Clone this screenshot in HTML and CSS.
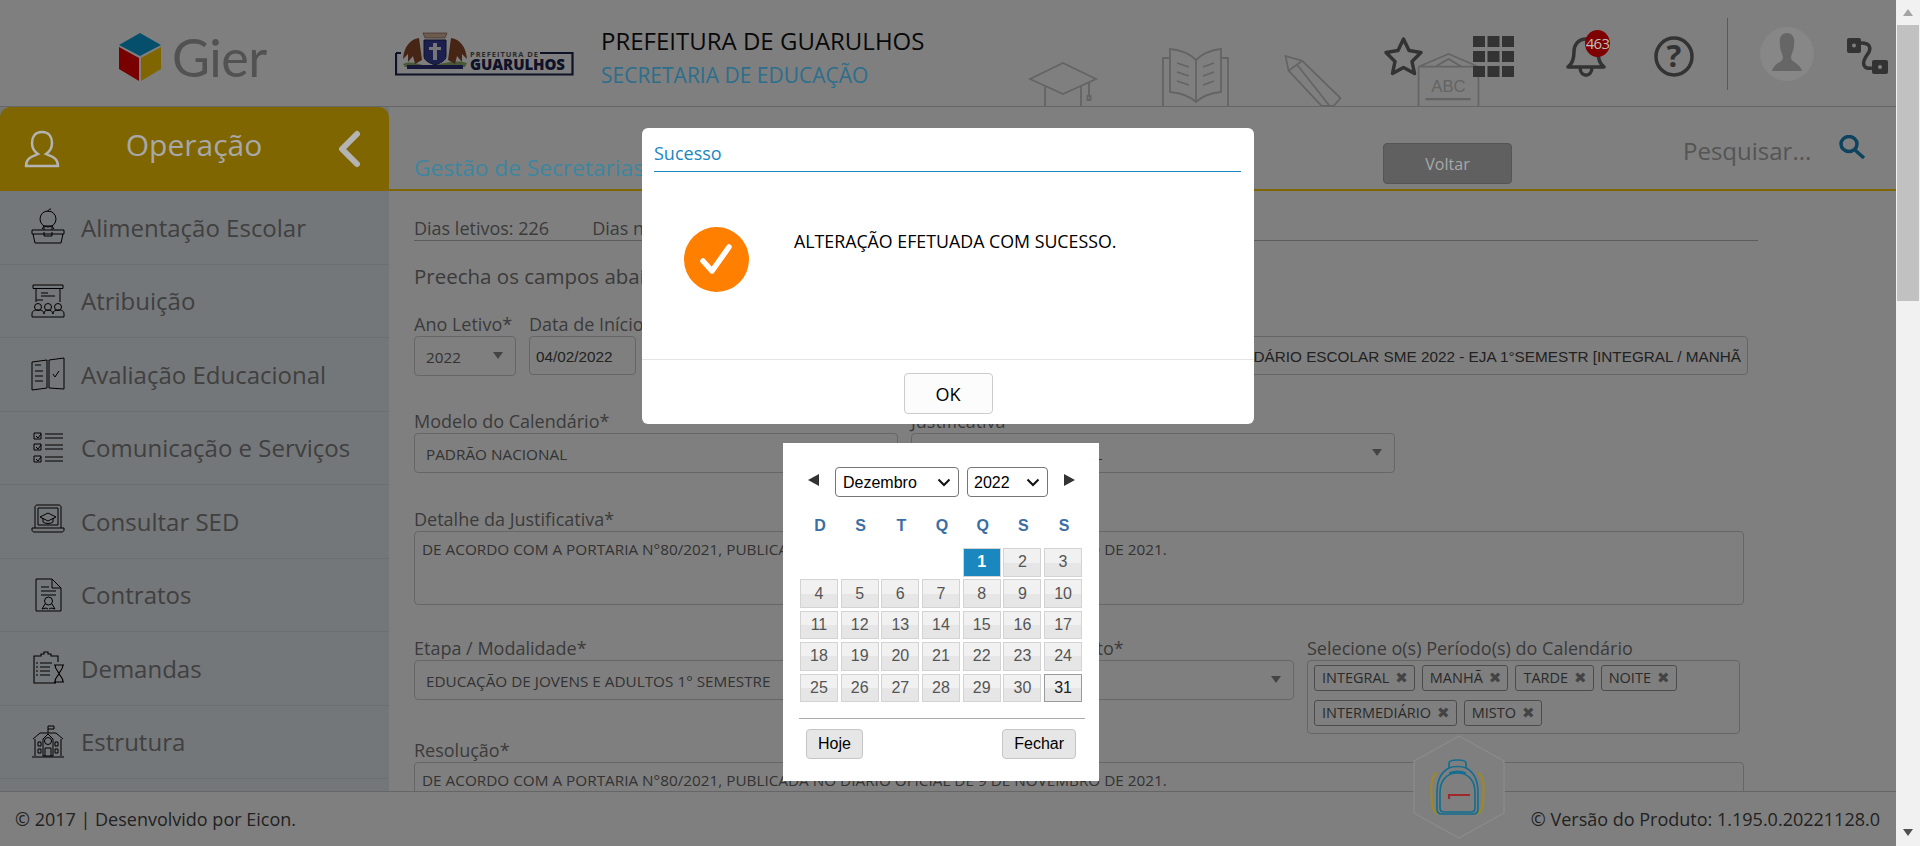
FILE: index.html
```html
<!DOCTYPE html>
<html lang="pt-BR">
<head>
<meta charset="utf-8">
<title>Gestão de Secretarias</title>
<link rel="stylesheet" href="styles.css">
</head>
<body>
<div class="app">
  <div class="page">
    <header class="topbar">
      <div class="brand">
        <svg class="cube" viewBox="0 0 42 48"><polygon points="21,0 42,12 21,23 0,12" fill="#0a9fd8"/><polygon points="0,14 20,25 20,48 0,36" fill="#f00000"/><polygon points="42,14 22,25 22,48 42,36" fill="#ffcc00"/></svg>
        <span class="brand-name">Gier</span>
      </div>
      <svg class="city-logo" viewBox="0 0 179 44">
        <path d="M1 21V42.500H177.500V21H145M1 21H6" fill="none" stroke="#1c2450" stroke-width="2.200"/>
        <path d="M8 32C20 27 26 36 40 33C54 30 62 28 72 31L70 35H10Z" fill="#8fb56a"/>
        <path d="M24 6C15 7 9 15 8 27L13 22L13 30L18 24L20 32L27 28Z" fill="#8c4a2a"/>
        <path d="M56 6C65 7 71 15 72 27L67 22L67 30L62 24L60 32L53 28Z" fill="#8c4a2a"/>
        <path d="M29 8H51V24C51 29 45 31 40 33C35 31 29 29 29 24Z" fill="#3b3f9c" stroke="#1c2450"/>
        <path d="M38 11H42V15H46V18H42V28H38V18H34V15H38Z" fill="#ededed"/>
        <path d="M28 1H52L50 6H30Z" fill="#d8b9a0" stroke="#7a4a30" stroke-width=".6"/>
        <path d="M12 33H68V37H12Z" fill="#2f2f78"/>
        <text x="75" y="24.500" class="city-small" textLength="68">PREFEITURA DE</text>
        <text x="75" y="38" class="city-big" textLength="95">GUARULHOS</text>
      </svg>
      <div class="org">
        <div class="org-name">PREFEITURA DE GUARULHOS</div>
        <div class="org-unit">SECRETARIA DE EDUCAÇÃO</div>
      </div>
      <div class="art">
        <svg class="art-cap" viewBox="0 0 68 44"><path d="M34 1L67 17L34 32L1 17ZM16 24V44M52 24V44M60 20V34M58.500 34H61.500V38H58.500Z"/></svg>
        <svg class="art-book" viewBox="0 0 67 58"><path d="M8 10H1V58M59 10H66V58M8 1C18 2 28 6 34 12C40 6 50 2 59 1V44C50 45 40 48 34 54C28 48 18 45 8 44ZM34 12V54M15 15L27 19M15 24L27 28M15 33L27 37M52 15L41 19M52 24L41 28M52 33L41 37"/></svg>
        <svg class="art-pencil" viewBox="0 0 58 52"><path d="M1 1L18 6L57 44L50 52H38L4 16ZM4 16L18 6M12 9L46 52"/></svg>
        <svg class="art-abc" viewBox="0 0 63 54"><path d="M1 14L31.500 1L62 14ZM1 14V54M62 14V54M18 14L31.500 6L45 14"/><path d="M8 47H54" stroke-width="2.500"/><text x="31.500" y="40" class="abc-text">ABC</text></svg>
      </div>
      <div class="tools">
        <svg class="tool-star" viewBox="0 0 40 40"><path d="M20 3L25.500 14.500L37.500 16.500L28.500 25.500L31 37.500L20 31.500L9 37.500L11.500 25.500L2.500 16.500L14.500 14.500Z"/></svg>
        <svg class="tool-grid" viewBox="0 0 41 41"><rect width="12" height="11"/><rect x="14.500" width="12" height="11"/><rect x="29" width="12" height="11"/><rect y="15" width="12" height="11"/><rect x="14.500" y="15" width="12" height="11"/><rect x="29" y="15" width="12" height="11"/><rect y="30" width="12" height="11"/><rect x="14.500" y="30" width="12" height="11"/><rect x="29" y="30" width="12" height="11"/></svg>
        <div class="bell-box">
          <svg class="tool-bell" viewBox="0 0 40 41"><path d="M2 31C6 28 8 24 8 16C8 8 13 3 20 3C27 3 32 8 32 16C32 24 34 28 38 31ZM14 31C14 42 26 42 26 31"/></svg>
          <span class="badge"><span class="badge-num">463</span></span>
        </div>
        <svg class="tool-help" viewBox="0 0 40 41"><ellipse cx="20" cy="20.500" rx="18" ry="18.500"/><text x="20" y="31" class="help-mark">?</text></svg>
        <span class="tool-divider"></span>
        <div class="avatar"><svg viewBox="0 0 54 54"><path d="M27 6C21 6 19 11 20 18C20 24 23 27 23 31C23 35 14 36 12 44H42C40 36 31 35 31 31C31 27 34 24 34 18C35 11 33 6 27 6Z"/></svg></div>
        <svg class="tool-switch" viewBox="0 0 41 36"><path class="sw-line" d="M14 5C25 5 24 12 20 17C15 24 15 32 25 30"/><rect class="sw-box" x="0" y="0" width="14" height="15" rx="2"/><rect class="sw-box" x="25" y="22" width="16" height="14" rx="2"/><circle class="sw-hole" cx="7" cy="7.500" r="2"/><circle class="sw-hole" cx="33" cy="29" r="2"/></svg>
      </div>
    </header>
    <div class="body">
      <aside class="sidebar">
        <div class="side-head">
          <svg class="side-user" viewBox="0 0 36 38"><path d="M18 2C11 2 8 7 8 13C8 18 11 22 14 24C10 26 2 27 2 36H34C34 27 26 26 22 24C25 22 28 18 28 13C28 7 25 2 18 2Z"/></svg>
          <span class="side-title">Operação</span>
          <svg class="side-back" viewBox="0 0 24 38"><path d="M20 4L5 19L20 34"/></svg>
        </div>
        <nav class="side-nav">
          <a class="side-item"><svg class="side-icon" viewBox="0 0 34 34"><circle cx="17" cy="9" r="8"/><path d="M17 2C17 0 18 -1 20 -1M11 19L13 16H21L23 19M1 20H33V24H1ZM2 24L4 33H30L32 24M13 20V17M21 20V17M13 22V26H21V22"/></svg><span>Alimentação Escolar</span></a>
          <a class="side-item"><svg class="side-icon" viewBox="0 0 34 34"><path d="M2 1H32V4.500H2ZM5 4.500V18M29 4.500V18M10 9H17M10 12H24M5 16H12"/><circle cx="7" cy="23" r="3.500"/><circle cx="17" cy="23" r="3.500"/><circle cx="27" cy="23" r="3.500"/><path d="M1 33V30C1 27 3 26 7 26C11 26 13 27 13 30C13 27 15 26 17 26C20 26 21 27 22 30C22 27 24 26 27 26C31 26 33 27 33 30V33Z"/></svg><span>Atribuição</span></a>
          <a class="side-item"><svg class="side-icon" viewBox="0 0 34 34"><path d="M1 5L16 3V31L1 33ZM18 3L33 1V32L18 31ZM4 8H10M4 14H12M4 19H12M4 24H12M22 17L24 20L28 14"/></svg><span>Avaliação Educacional</span></a>
          <a class="side-item"><svg class="side-icon" viewBox="0 0 34 34"><path d="M3 2H10V8H3ZM3 13H10V19H3ZM3 25H10V31H3ZM14 3H32M14 7H32M14 14H32M14 18H32M14 26H32M14 30H32M5 5L7 7L10 3M5 16L7 18L10 14M5 28L7 30L10 26"/></svg><span>Comunicação e Serviços</span></a>
          <a class="side-item"><svg class="side-icon" viewBox="0 0 34 34"><path d="M4 24V3C4 2 5 1 6 1H28C29 1 30 2 30 3V24M1 24H33V26C33 27 32 28 31 28H3C2 28 1 27 1 26ZM17 9L25 13L17 17L9 13ZM12 14V18C14 20 20 20 22 18V14M7 4H27V21H7Z"/></svg><span>Consultar SED</span></a>
          <a class="side-item"><svg class="side-icon" viewBox="0 0 34 34"><path d="M5 1H21L30 10V33H5ZM21 1V10H30M10 9H18M10 13H25M10 17H25"/><circle cx="17.500" cy="23" r="4"/><path d="M14 26L11 31L15 30L17 31M21 26L24 31L20 30L18 31"/></svg><span>Contratos</span></a>
          <a class="side-item"><svg class="side-icon" viewBox="0 0 34 34"><path d="M27 11V5H20V3H17V1H13V3H10V5H3V32H25M5 12H7M9 12H21M5 16H7M9 16H19M5 20H7M9 20H19M5 24H7M9 24H19M23 14H33M23 31H33M24 14C24 19 28 21 28 22.500C28 24 24 26 24 31M32 14C32 19 28 21 28 22.500C28 24 32 26 32 31" stroke-width="1.100"/></svg><span>Demandas</span></a>
          <a class="side-item"><svg class="side-icon" viewBox="0 0 34 34"><path d="M17 8V1H23V4H17M2 14L9 8H25L32 14M4 14V31M30 14V31M1 32H33M12 14L17 9L22 14V31H12ZM14 31V23H20V31M7 17H10V21H7ZM24 17H27V21H24ZM7 24H10V28H7ZM24 24H27V28H24Z"/><circle cx="17" cy="16" r="3.500"/></svg><span>Estrutura</span></a>
        </nav>
      </aside>
      <main class="content">
        <div class="content-head">
          <h1 class="content-title">Gestão de Secretarias</h1>
          <button class="btn-back"><span class="btn-back-text">Voltar</span></button>
          <span class="search-text">Pesquisar...</span>
          <svg class="search-icon" viewBox="0 0 27 24"><ellipse cx="10" cy="9" rx="8" ry="7.500"/><path d="M16 15L25 23"/></svg>
        </div>
        <div class="form">
          <div class="stats"><span>Dias letivos: 226</span><span>Dias não letivos: 139</span></div>
          <p class="form-intro">Preecha os campos abaixo para alterar</p>
          <div class="row row-first">
            <div class="field f-year"><label>Ano Letivo*</label><div class="select"><span>2022</span><i class="caret"></i></div></div>
            <div class="field f-date"><label>Data de Início*</label><div class="input plain">04/02/2022</div></div>
            <div class="field f-date"><label>Data de Fim*</label><div class="input plain">31/12/2022</div></div>
            <div class="field f-name"><label>Descrição*</label><div class="input plain name-text"><span>CALENDÁRIO ESCOLAR SME 2022 - EJA 1°SEMESTR [INTEGRAL / MANHÃ</span></div></div>
          </div>
          <div class="row row-second">
            <div class="field f-half"><label>Modelo do Calendário*</label><div class="select"><span>PADRÃO NACIONAL</span><i class="caret"></i></div></div>
            <div class="field f-half"><label>Justificativa</label><div class="select"><span>CALENDÁRIO MUNICIPAL</span><i class="caret"></i></div></div>
          </div>
          <div class="row row-third">
            <div class="field f-wide"><label>Detalhe da Justificativa*</label><div class="area">DE ACORDO COM A PORTARIA N°80/2021, PUBLICADA NO DIÁRIO OFICIAL DE 9 DE NOVEMBRO DE 2021.</div></div>
          </div>
          <div class="row row-fourth">
            <div class="field f-half"><label>Etapa / Modalidade*</label><div class="select"><span>EDUCAÇÃO DE JOVENS E ADULTOS 1° SEMESTRE</span></div></div>
            <div class="field f-mode"><label>Formas de Atendimento*</label><div class="select end"><i class="caret"></i></div></div>
            <div class="field f-period"><label>Selecione o(s) Período(s) do Calendário</label>
              <div class="tags">
                <span class="tag">INTEGRAL <b>✖</b></span><span class="tag">MANHÃ <b>✖</b></span><span class="tag">TARDE <b>✖</b></span><span class="tag">NOITE <b>✖</b></span><span class="tag">INTERMEDIÁRIO <b>✖</b></span><span class="tag">MISTO <b>✖</b></span>
              </div>
            </div>
          </div>
          <div class="row row-fifth">
            <div class="field f-wide"><label>Resolução*</label><div class="area">DE ACORDO COM A PORTARIA N°80/2021, PUBLICADA NO DIÁRIO OFICIAL DE 9 DE NOVEMBRO DE 2021.</div></div>
          </div>
        </div>
      </main>
    </div>
    <footer class="footer">
      <span>© 2017 | Desenvolvido por Eicon.</span>
      <span>© Versão do Produto: 1.195.0.20221128.0</span>
    </footer>
    <svg class="hex" viewBox="0 0 92 104">
      <polygon class="hex-shape" points="46,1 91,26 91,78 46,103 1,78 1,26"/>
      <path class="pack-strap" d="M24 38C17 42 18 54 19 66C19 72 21 77 25 79M65 38C72 42 71 54 70 66C70 72 68 77 64 79"/>
      <path class="pack-body" d="M36 33V28C36 26 39 25 44.500 25C50 25 53 26 53 28V33C61 37 65 46 65 58V74C65 77 63 79 60 79H29C26 79 24 77 24 74V58C24 46 28 37 36 33ZM36 33C40 31 49 31 53 33M36 38C41 36 48 36 53 38M27 58C27 46 33 38 44.500 38C56 38 62 46 62 58V73C62 76 61 77 58 77H31C28 77 27 76 27 73Z"/>
      <path class="pack-zip" d="M35 60H57M36 60V64"/>
    </svg>
  </div>
  <div class="scrollbar">
    <i class="sb-up"></i>
    <i class="sb-thumb"></i>
    <i class="sb-down"></i>
  </div>
  <div class="overlay"></div>
  <section class="modal">
    <div class="modal-head"><span>Sucesso</span></div>
    <div class="modal-body">
      <svg class="ok-icon" viewBox="0 0 65 65"><circle cx="32.500" cy="32.500" r="32.500"/><path d="M19 34L28 44L45 20"/></svg>
      <p>ALTERAÇÃO EFETUADA COM SUCESSO.</p>
    </div>
    <div class="modal-foot"><button class="btn-ok">OK</button></div>
  </section>
  <section class="picker">
    <div class="picker-head">
      <i class="arrow-left"></i>
      <select class="pick-month"><option>Dezembro</option></select>
      <select class="pick-year"><option>2022</option></select>
      <i class="arrow-right"></i>
    </div>
    <div class="week"><span>D</span><span>S</span><span>T</span><span>Q</span><span>Q</span><span>S</span><span>S</span></div>
    <div class="days">
      <span class="blank"></span><span class="blank"></span><span class="blank"></span><span class="blank"></span>
      <a class="today">1</a><a>2</a><a>3</a>
      <a>4</a><a>5</a><a>6</a><a>7</a><a>8</a><a>9</a><a>10</a>
      <a>11</a><a>12</a><a>13</a><a>14</a><a>15</a><a>16</a><a>17</a>
      <a>18</a><a>19</a><a>20</a><a>21</a><a>22</a><a>23</a><a>24</a>
      <a>25</a><a>26</a><a>27</a><a>28</a><a>29</a><a>30</a><a class="active">31</a>
    </div>
    <div class="picker-foot"><button>Hoje</button><button>Fechar</button></div>
  </section>
</div>
</body>
</html>
```

FILE: styles.css
```css
* { box-sizing: border-box; }
html, body { margin: 0; height: 100%; overflow: hidden; }
body { font-family: "Open Sans", sans-serif; color: #777; background: #fff; }
.app { position: relative; width: 1920px; height: 846px; display: flex; overflow: hidden; }
.page { width: 1896px; height: 846px; display: flex; flex-direction: column; background: #fff; }

/* top bar */
.topbar { height: 107px; flex: none; display: flex; align-items: flex-start; border-bottom: 1px solid #ccc; }
.brand { width: 395px; flex: none; padding: 33px 0 0 119px; display: flex; gap: 11px; align-items: flex-start; }
.cube { width: 42px; height: 48px; flex: none; }
.brand-name { font-family: Lato, sans-serif; font-weight: 400; font-size: 52px; line-height: 48px; color: #a4a4a4; letter-spacing: -.5px; }
.city-logo { width: 179px; height: 44px; margin-top: 32px; flex: none; }
.city-small { font: 700 7.500px "Open Sans", sans-serif; fill: #555; }
.city-big { font: 800 15px "Open Sans", sans-serif; fill: #1c2450; }
.org { margin: 24px 0 0 27px; width: 420px; flex: none; }
.org-name { font-size: 24px; line-height: 34px; color: #111; }
.org-unit { position: relative; z-index: 1; font-size: 21px; line-height: 34px; color: #2c6e8c; }
.art svg { position: absolute; fill: none; stroke: #c8c8c8; stroke-width: 1.800; overflow: visible; }
.art-cap { left: 1029px; top: 62px; width: 68px; height: 44px; }
.art-book { left: 1162px; top: 48px; width: 67px; height: 58px; }
.art-pencil { left: 1284px; top: 55px; width: 58px; height: 51px; }
.art-abc { left: 1417px; top: 53px; width: 63px; height: 53px; }
.abc-text { font: 400 17px "Liberation Sans", sans-serif; text-anchor: middle; fill: #c8c8c8; stroke: none; }
.tools svg, .bell-box, .avatar, .tool-divider { position: absolute; }
.tool-star { left: 1383px; top: 36px; width: 41px; height: 40px; fill: none; stroke: #666; stroke-width: 3.500; stroke-linejoin: round; }
.tool-grid { left: 1473px; top: 36px; width: 41px; height: 41px; fill: #666; }
.bell-box { left: 1566px; top: 30px; width: 46px; height: 48px; }
.bell-box .tool-bell { left: 0; top: 6px; width: 40px; height: 41px; fill: none; stroke: #666; stroke-width: 3.500; stroke-linejoin: round; }
.badge { position: absolute; left: 19px; top: 0; width: 25px; height: 27px; border-radius: 50%; background: #ff0000; font-size: 15px; line-height: 27px; text-align: center; letter-spacing: -.8px; }
.badge-num { position: relative; z-index: 1; color: #bdbdbd; }
.tool-help { left: 1654px; top: 36px; width: 40px; height: 41px; fill: none; stroke: #666; stroke-width: 3.500; }
.help-mark { font: 700 31px "Open Sans", sans-serif; fill: #666; stroke: none; text-anchor: middle; }
.tool-divider { left: 1727px; top: 18px; width: 1px; height: 72px; background: #b0b0b0; }
.avatar { z-index: 1; left: 1760px; top: 27px; width: 54px; height: 54px; border-radius: 50%; background: #878787; }
.avatar svg { position: static; display: block; width: 54px; height: 54px; fill: #666; }
.tool-switch { left: 1847px; top: 38px; width: 41px; height: 36px; }
.sw-line { fill: none; stroke: #666; stroke-width: 3.500; }
.sw-box { fill: #666; }
.sw-hole { fill: #fff; }

/* layout */
.body { flex: 1; min-height: 0; display: flex; }
.sidebar { width: 389px; flex: none; background: #e9eef2; overflow: hidden; }
.side-head { height: 84px; background: #ffcc00; border-radius: 10px 10px 0 0; display: flex; align-items: center; padding: 0 28px 0 24px; }
.side-user { position: relative; z-index: 1; width: 36px; height: 38px; fill: none; stroke: #b4b4b4; stroke-width: 2.500; flex: none; }
.side-title { position: relative; z-index: 1; flex: 1; text-align: center; font-size: 30px; line-height: 40px; padding: 0 9px 8px 0; color: #a8a8a8; }
.side-back { position: relative; z-index: 1; width: 24px; height: 38px; fill: none; stroke: #b4b4b4; stroke-width: 6; stroke-linecap: round; stroke-linejoin: round; flex: none; }
.side-item { height: 73.500px; display: flex; align-items: center; gap: 16px; padding-left: 31px; border-bottom: 1px solid #d8dde1; font-size: 24px; color: #808080; }
.side-icon { width: 34px; height: 34px; flex: none; fill: none; stroke: #000; stroke-width: 1; overflow: visible; }

/* content */
.content { flex: 1; min-width: 0; overflow: hidden; }
.content-head { height: 84px; border-bottom: 2px solid #ffcc00; display: flex; align-items: flex-start; padding-left: 25px; }
.content-title { position: relative; z-index: 1; margin: 47px 0 0; width: 969px; flex: none; font-size: 22.700px; font-weight: 400; line-height: 28px; color: #3d86a0; white-space: nowrap; }
.btn-back { margin-top: 36px; width: 129px; height: 41px; flex: none; background: #c0c0c0; border: 1px solid #aaa; border-radius: 4px; font: 400 16px "Open Sans", sans-serif; padding: 0; }
.btn-back-text { position: relative; z-index: 1; color: #a8a8a8; }
.search-text { margin: 27px 0 0 171px; font-size: 24px; line-height: 34px; color: #aaa; flex: none; }
.search-icon { margin: 28px 0 0 28px; width: 27px; height: 24px; flex: none; fill: none; stroke: #1a87bf; stroke-width: 3.500; }
.form { padding: 24px 138px 0 25px; }
.stats { display: flex; gap: 43px; height: 26px; font-size: 18px; line-height: 26px; border-bottom: 1px solid #bbb; }
.form-intro { margin: 21px 0 0; font-size: 20.500px; line-height: 28px; white-space: nowrap; }
.row { display: flex; gap: 13px; }
.row-first { margin-top: 21px; }
.row-second { margin-top: 32px; }
.row-third { margin-top: 33px; }
.row-fourth { margin-top: 30px; }
.row-fifth { margin-top: 3px; }
.field { min-width: 0; flex: none; }
.field label { display: block; height: 25px; font-size: 18px; line-height: 26px; white-space: nowrap; }
.f-year { width: 102px; }
.f-date { width: 107px; }
.f-name { flex: 1; margin-right: 10px; }
.f-half { width: 484px; }
.f-wide { width: 1330px; }
.f-mode { width: 383px; }
.f-period { width: 433px; }
.select, .input, .area, .tags { border: 1px solid #ccc; border-radius: 4px; background: transparent; font-size: 15.300px; color: #666; }
.select { height: 40px; display: flex; align-items: center; justify-content: space-between; padding: 2px 12px 0 11px; white-space: nowrap; }
.select.end { justify-content: flex-end; }
.caret { width: 0; height: 0; border-left: 5px solid transparent; border-right: 5px solid transparent; border-top: 7px solid #888; margin-top: -3px; flex: none; }
.input { height: 39px; display: flex; align-items: center; padding-top: 2px; }
.plain { font-family: "Liberation Sans", sans-serif; color: #444; padding-left: 6px; padding-right: 6px; white-space: nowrap; }
.name-text { justify-content: flex-end; overflow: hidden; }
.area { height: 74px; padding: 6px 7px; line-height: 22px; white-space: nowrap; overflow: hidden; }
.tags { height: 74px; display: flex; flex-wrap: wrap; align-content: flex-start; gap: 9px 7px; padding: 4px 6px; font-size: 14.500px; }
.tag { height: 26px; display: inline-flex; align-items: center; gap: 6px; padding: 0 6px 0 7px; border: 1px solid #999; border-radius: 3px; color: #555; line-height: 24px; white-space: nowrap; }
.tag b { font: 400 15px "DejaVu Sans", sans-serif; color: #888; }

/* footer */
.footer { height: 55px; flex: none; background: #fff; border-top: 1px solid #ccc; display: flex; justify-content: space-between; align-items: center; padding: 0 16px 0 15px; font-size: 18px; color: #444; }
.hex { position: absolute; z-index: 1; left: 1413px; top: 735px; width: 92px; height: 104px; overflow: visible; }
.hex-shape { fill: #7f7f7f; stroke: #8c8c8c; stroke-width: 1.200; }
.pack-strap { fill: none; stroke: #a08a20; stroke-width: 2; }
.pack-body { fill: none; stroke: #146e90; stroke-width: 1.700; }
.pack-zip { fill: none; stroke: #a02828; stroke-width: 2.200; }

/* scrollbar */
.scrollbar { position: relative; width: 24px; flex: none; background: #f1f1f1; }
.sb-thumb { position: absolute; left: 1px; top: 25px; width: 22px; height: 276px; background: #c1c1c1; }
.sb-up, .sb-down { position: absolute; left: 7px; width: 0; height: 0; border-left: 5.500px solid transparent; border-right: 5.500px solid transparent; }
.sb-up { top: 9px; border-bottom: 7px solid #a3a3a3; }
.sb-down { top: 829px; border-top: 7px solid #505050; }

/* overlay */
.overlay { position: absolute; left: 0; top: 0; width: 1896px; height: 846px; background: rgba(0, 0, 0, .5); }

/* dialog */
.modal { position: absolute; z-index: 2; left: 642px; top: 128px; width: 612px; height: 296px; background: #fff; border-radius: 6px; display: flex; flex-direction: column; }
.modal-head { height: 44px; margin: 0 13px 0 12px; padding-top: 12px; border-bottom: 1px solid #1a87bf; font-size: 18px; line-height: 26px; color: #1a87bf; }
.modal-body { flex: 1; display: flex; align-items: flex-start; border-bottom: 1px solid #e5e5e5; padding: 55px 0 0 42px; }
.ok-icon { width: 65px; height: 65px; flex: none; }
.ok-icon circle { fill: #ff7f00; }
.ok-icon path { fill: none; stroke: #fff; stroke-width: 5.500; stroke-linecap: round; stroke-linejoin: round; }
.modal-body p { margin: 2px 0 0 45px; font-size: 17.800px; line-height: 24px; color: #000; }
.modal-foot { height: 64px; flex: none; display: flex; justify-content: center; padding-top: 13px; }
.btn-ok { width: 89px; height: 41px; background: #fcfcfc; border: 1px solid #ccc; border-radius: 4px; font: 400 18px "Open Sans", sans-serif; color: #000; padding: 0; }

/* date picker */
.picker { position: absolute; z-index: 2; left: 783px; top: 443px; width: 316px; height: 338px; background: #fff; padding: 24px 15px 0 17px; font-family: "Liberation Sans", sans-serif; }
.picker-head { display: flex; align-items: center; height: 30px; padding-left: 8px; }
.arrow-left, .arrow-right { width: 0; height: 0; border-top: 6px solid transparent; border-bottom: 6px solid transparent; flex: none; margin-top: -4px; }
.arrow-left { border-right: 11px solid #333; }
.arrow-right { border-left: 11px solid #333; }
.pick-month, .pick-year { appearance: none; font: 400 16px "Liberation Sans", sans-serif; height: 30px; padding: 0 0 0 7px; color: #000; border: 1px solid #767676; border-radius: 4px; flex: none; background-color: #fff; background-image: url("data:image/svg+xml,%3Csvg xmlns='http://www.w3.org/2000/svg' width='14' height='9'%3E%3Cpath d='M1.500 1.500L7 7L12.500 1.500' fill='none' stroke='%23111' stroke-width='2'/%3E%3C/svg%3E"); background-repeat: no-repeat; background-position: right 7px center; }
.pick-month { width: 124px; margin-left: 16px; }
.pick-year { width: 81px; margin-left: 8px; margin-right: 16px; padding-left: 6px; }
.week, .days { display: grid; grid-template-columns: repeat(7, 37.900px); column-gap: 2.800px; }
.week { height: 51px; align-items: center; text-align: center; font-size: 16px; font-weight: 700; color: #3b6ea5; padding: 7px 0 0 1px; }
.days { grid-auto-rows: 28.600px; row-gap: 2.800px; }
.days a { display: flex; align-items: center; justify-content: center; border: 1px solid #d3d3d3; background: linear-gradient(#f1f1f1 50%, #e6e6e6 50%); color: #555; font-size: 16px; }
.days .today { background: #1a87bf; color: #fff; font-weight: 700; border-color: #d3d3d3; }
.days .active { border-color: #999; color: #212121; }
.picker-foot { margin: 16px -1px 0 -1px; padding: 10px 9px 0 7px; border-top: 1px solid #aaa; display: flex; justify-content: space-between; }
.picker-foot button { height: 30px; padding: 0 11px; background: #e6e6e6; border: 1px solid #c5c5c5; border-radius: 4px; font: 400 16px "Liberation Sans", sans-serif; color: #000; }
```
